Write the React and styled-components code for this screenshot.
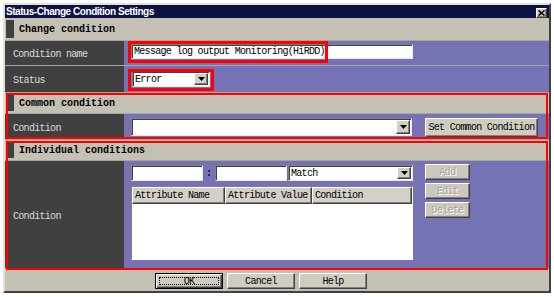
import React from 'react';
import styled, { createGlobalStyle, css } from 'styled-components';

const Global = createGlobalStyle`
  html, body { margin: 0; padding: 0; background: #fff; }
  body { font-family: "Liberation Mono", "DejaVu Sans Mono", monospace; }
`;

const mono = css`
  font-family: "Liberation Mono", "DejaVu Sans Mono", monospace;
  font-size: 10px;
  letter-spacing: -0.7px;
`;

const raised = css`
  border: 1px solid;
  border-color: #ffffff #404040 #404040 #ffffff;
  box-shadow: inset -1px -1px 0 #808080;
`;

const sunken = css`
  border: 1px solid;
  border-color: #808080 #e8e8e8 #e8e8e8 #808080;
  box-shadow: inset 1px 1px 0 #404040;
`;

const Window = styled.div`
  box-sizing: border-box;
  margin: 3px;
  width: 548px;
  height: 290px;
  border: 2px solid;
  border-color: #e4e0d4 #404040 #404040 #e4e0d4;
  display: flex;
  flex-direction: column;
`;

const TitleBar = styled.div`
  height: 13px;
  flex: none;
  background: #0a1246;
  display: flex;
  align-items: center;
  justify-content: space-between;
  padding: 0 2px 0 1px;
`;

const Title = styled.span`
  font-family: "Liberation Sans", Arial, sans-serif;
  font-weight: bold;
  font-size: 10px;
  letter-spacing: -0.45px;
  color: #ffffff;
  white-space: nowrap;
`;

const CloseButton = styled.span`
  box-sizing: border-box;
  width: 11px;
  height: 10px;
  margin-top: 2px;
  background: #d4d0c8;
  ${raised};
  display: flex;
  align-items: center;
  justify-content: center;
`;

const Body = styled.div`
  flex: 1;
  display: flex;
  flex-direction: column;
  gap: 1px;
  background: #a9a6a0;
`;

const Section = styled.div`
  position: relative;
  display: flex;
  flex-direction: column;
  gap: 1px;
  &::after {
    content: '';
    display: ${p => (p.$mark ? 'block' : 'none')};
    position: absolute;
    left: 1px;
    right: 1px;
    top: ${p => p.$top || 0}px;
    bottom: ${p => p.$bottom || 0}px;
    border: 2px solid #ff0000;
    pointer-events: none;
    z-index: 3;
  }
`;

const Header = styled.div`
  box-sizing: border-box;
  height: ${p => p.$h}px;
  background: #c4c0b4;
  display: flex;
  align-items: center;
  gap: 5px;
  padding: 2px 0 2px 1px;
  font-family: "Liberation Mono", "DejaVu Sans Mono", monospace;
  font-weight: bold;
  font-size: 10px;
  color: #000;
  white-space: nowrap;
  &::before {
    content: '';
    align-self: stretch;
    width: 8px;
    background: #404040;
  }
`;

const Row = styled.div`
  display: grid;
  grid-template-columns: 119px 1fr;
  height: ${p => p.$h}px;
`;

const Label = styled.div`
  background: #404040;
  color: #dcdcdc;
  ${mono};
  display: flex;
  align-items: center;
  padding: 3px 0 0 8px;
  white-space: nowrap;
`;

const Value = styled.div`
  position: relative;
  background: #7673b4;
  display: flex;
  align-items: flex-start;
  gap: ${p => p.$gap || 0}px;
  padding: ${p => p.$pt}px 0 0 ${p => p.$pl || 7}px;
`;

const Mark = styled.span`
  position: absolute;
  box-sizing: border-box;
  left: ${p => p.$l}px;
  top: ${p => p.$t}px;
  width: ${p => p.$w}px;
  height: ${p => p.$h}px;
  border: 3px solid #ff0000;
  pointer-events: none;
  z-index: 2;
`;

const TextBox = styled.div`
  box-sizing: border-box;
  flex: none;
  width: ${p => p.$w}px;
  height: ${p => p.$h || 16}px;
  background: #ffffff;
  ${sunken};
  ${mono};
  color: #000;
  padding-left: 2px;
  display: flex;
  align-items: center;
  white-space: nowrap;
  overflow: hidden;
`;

const Select = styled.div`
  box-sizing: border-box;
  flex: none;
  width: ${p => p.$w}px;
  height: ${p => p.$h || 16}px;
  background: #ffffff;
  ${sunken};
  padding: 1px;
  display: flex;
  align-items: stretch;
`;

const SelectText = styled.span`
  flex: 1;
  ${mono};
  color: #000;
  padding-left: 1px;
  display: flex;
  align-items: center;
  white-space: nowrap;
`;

const ArrowButton = styled.span`
  box-sizing: border-box;
  width: 14px;
  background: #d4d0c8;
  ${raised};
  display: flex;
  align-items: center;
  justify-content: center;
`;

const Button = styled.button`
  box-sizing: border-box;
  flex: none;
  width: ${p => p.$w}px;
  height: ${p => p.$h || 16}px;
  padding: 0;
  margin: 0;
  background: #d0ccc0;
  ${raised};
  ${mono};
  color: #000;
  display: flex;
  align-items: center;
  justify-content: center;
  white-space: nowrap;
  &:disabled {
    background: #ccc8bc;
    color: #a8a49c;
    text-shadow: 1px 1px 0 #ffffff;
  }
`;

const FocusButton = styled(Button)`
  border-color: #000;
  box-shadow: inset 1px 1px 0 #ffffff, inset -1px -1px 0 #404040, inset -2px -2px 0 #808080;
  padding: 3px;
`;

const FocusRing = styled.span`
  box-sizing: border-box;
  flex: 1;
  align-self: stretch;
  border: 1px dotted #000;
  display: flex;
  align-items: center;
  justify-content: center;
`;

const Column = styled.div`
  display: flex;
  flex-direction: column;
  gap: ${p => p.$gap}px;
  margin-top: ${p => p.$mt || 0}px;
`;

const Line = styled.div`
  display: flex;
  align-items: center;
`;

const Colon = styled.span`
  width: 12px;
  text-align: center;
  font-family: "Liberation Mono", monospace;
  font-weight: bold;
  font-size: 10px;
  color: #000;
`;

const Spacer = styled.span`
  width: 1px;
`;

const Table = styled.div`
  box-sizing: border-box;
  width: 282px;
  height: 74px;
  background: #ffffff;
  border: 1px solid;
  border-color: #808080 #ffffff #ffffff #808080;
`;

const TableHead = styled.div`
  display: flex;
  height: 17px;
`;

const HeadCell = styled.div`
  box-sizing: border-box;
  width: ${p => p.$w}px;
  background: #d4d0c8;
  ${raised};
  ${mono};
  color: #000;
  padding-left: 2px;
  display: flex;
  align-items: center;
  white-space: nowrap;
`;

const Footer = styled.div`
  flex: 1;
  background: #c4c0b4;
  display: flex;
  align-items: flex-start;
  gap: 4px;
  padding: 4px 0 0 150px;
`;

const DownArrow = () => (
  <svg width="7" height="4" viewBox="0 0 7 4">
    <polygon points="0,0 7,0 3.5,4" fill="#000" />
  </svg>
);

const CloseIcon = () => (
  <svg width="7" height="6" viewBox="0 0 7 6">
    <path d="M0.5 0.5 L6.5 5.5 M6.5 0.5 L0.5 5.5" stroke="#000" strokeWidth="1.6" />
  </svg>
);

const Dropdown = ({ w, h, text }) => (
  <Select $w={w} $h={h}>
    <SelectText>{text}</SelectText>
    <ArrowButton>
      <DownArrow />
    </ArrowButton>
  </Select>
);

export default function App() {
  return (
    <>
      <Global />
      <Window>
        <TitleBar>
          <Title>Status-Change Condition Settings</Title>
          <CloseButton>
            <CloseIcon />
          </CloseButton>
        </TitleBar>
        <Body>
          <Section>
            <Header $h={22}>Change condition</Header>
            <Row $h={24}>
              <Label>Condition name</Label>
              <Value $pt={3}>
                <TextBox $w={282} $h={15}>Message log output Monitoring(HiRDD)</TextBox>
                <Mark $l={4} $t={0} $w={200} $h={22} />
              </Value>
            </Row>
            <Row $h={26}>
              <Label>Status</Label>
              <Value $pt={5} $pl={8}>
                <Dropdown w={78} h={16} text="Error" />
                <Mark $l={4} $t={3} $w={86} $h={22} />
              </Value>
            </Row>
          </Section>
          <Section $mark>
            <Header $h={20}>Common condition</Header>
            <Row $h={25}>
              <Label>Condition</Label>
              <Value $pt={4} $gap={13}>
                <Dropdown w={281} h={18} text="" />
                <Button $w={113} $h={19}>Set Common Condition</Button>
              </Value>
            </Row>
          </Section>
          <Section $mark $top={1} $bottom={-2}>
            <Header $h={20}>Individual conditions</Header>
            <Row $h={107}>
              <Label>Condition</Label>
              <Value $pt={4} $gap={12}>
                <Column $gap={5}>
                  <Line>
                    <TextBox $w={72} $h={16} />
                    <Colon>:</Colon>
                    <TextBox $w={72} $h={16} />
                    <Spacer />
                    <Dropdown w={125} h={16} text="Match" />
                  </Line>
                  <Table>
                    <TableHead>
                      <HeadCell $w={93}>Attribute Name</HeadCell>
                      <HeadCell $w={87}>Attribute Value</HeadCell>
                      <HeadCell $w={100}>Condition</HeadCell>
                    </TableHead>
                  </Table>
                </Column>
                <Column $gap={3} $mt={-1}>
                  <Button $w={45} disabled>Add</Button>
                  <Button $w={45} disabled>Edit</Button>
                  <Button $w={45} disabled>Delete</Button>
                </Column>
              </Value>
            </Row>
          </Section>
          <Footer>
            <FocusButton $w={68}>
              <FocusRing>OK</FocusRing>
            </FocusButton>
            <Button $w={68}>Cancel</Button>
            <Button $w={68}>Help</Button>
          </Footer>
        </Body>
      </Window>
    </>
  );
}
